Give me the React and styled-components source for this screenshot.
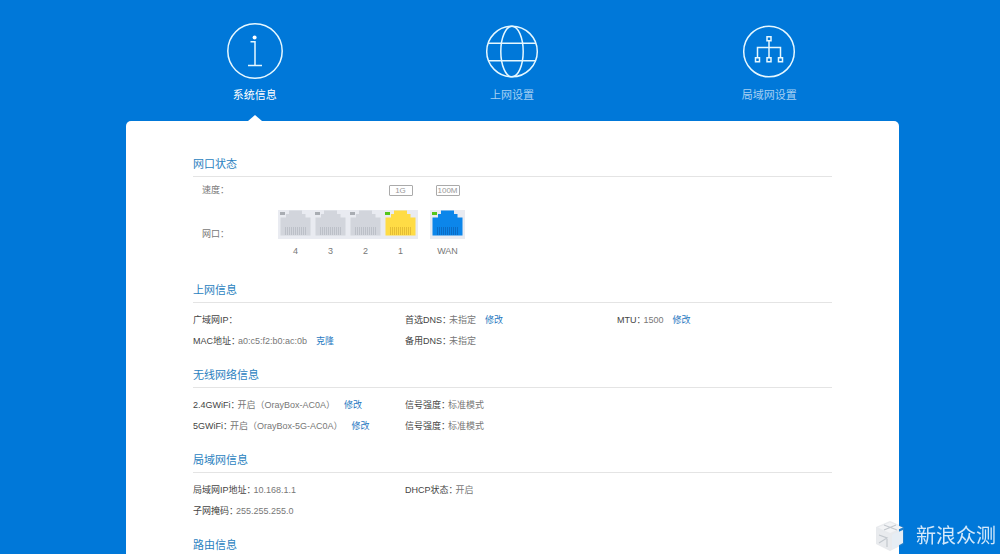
import styled, { createGlobalStyle } from 'styled-components'

const GlobalStyle = createGlobalStyle`
  * {
    box-sizing: border-box;
  }

  html {
    scrollbar-width: none;
  }

  body {
    margin: 0;
    background-color: #0078d9;
    color: #777;
    font-family: 'Liberation Sans', 'Noto Sans CJK SC', sans-serif;
    font-size: 9px;
    line-height: 21px;
  }
`

const Page = styled.div`
  display: flex;
  flex-direction: column;
  min-height: 100vh;
  padding: 0 101px 0 126px;
`

const Tabs = styled.nav`
  display: grid;
  grid-template-columns: repeat(3, 1fr);
  padding-right: 1px;
`

const Tab = styled.a`
  display: flex;
  flex-direction: column;
  align-items: center;
  padding-top: 23px;
  color: ${({ $active }) => ($active ? '#fff' : '#a6d0f3')};
  font-size: 11px;
  line-height: 20px;
  text-decoration: none;

  svg {
    margin-bottom: 6px;
  }

  &::after {
    content: '';
    margin-top: 10px;
    border: 7px solid transparent;
    border-top: 0;
    border-bottom: 6px solid ${({ $active }) => ($active ? '#fff' : 'transparent')};
  }
`

const Panel = styled.main`
  flex: 1;
  padding: 33px 67px 0;
  background-color: #fff;
  border-radius: 5px 5px 0 0;
`

const Section = styled.section`
  margin-bottom: 13px;
`

const Title = styled.h2`
  margin: 0;
  padding-bottom: 2px;
  border-bottom: 1px solid #e4e4e4;
  color: #2a7fc0;
  font-size: 11px;
  font-weight: 400;
  line-height: 20px;
`

const Info = styled.dl`
  display: grid;
  grid-template-columns: repeat(3, 1fr);
  margin: 7px 0 0;
  padding-right: 3px;
`

const Item = styled.div`
  display: flex;
  grid-column: ${({ $col }) => $col};
  white-space: nowrap;

  dt {
    margin-right: -2px;
    color: #444;
  }

  dd {
    margin: 0;
  }
`

const Action = styled.a`
  margin-left: 9px;
  color: #1f78c1;
  text-decoration: none;
`

const PortRow = styled.div`
  display: flex;
  margin-top: ${({ $gap }) => $gap}px;
`

const Ports = styled.div`
  padding-bottom: 3px;
`

const PortLabel = styled.span`
  width: 85px;
  padding-left: 9px;
  line-height: ${({ $height }) => $height}px;
`

const Port = styled.div`
  display: flex;
  flex-direction: column;
  align-items: center;
  width: 35px;
  margin-left: ${({ $wan }) => ($wan ? 12 : 0)}px;
  line-height: 25px;

  svg {
    display: block;
  }
`

const Speed = styled.span`
  width: 24px;
  margin-top: 5px;
  border: 1px solid #aaa;
  border-radius: 1px;
  color: #999;
  font-size: 8px;
  line-height: 9px;
  text-align: center;
`

const Watermark = styled.div`
  position: fixed;
  right: 4px;
  bottom: 3px;
  display: flex;
  align-items: center;
  gap: 11px;
  color: #d3e8fa;
  font-size: 20px;
  line-height: 28px;
`

const InfoIcon = () => (
  <svg width="56" height="56" viewBox="0 0 56 56" fill="none" stroke="#e6f8ff" strokeWidth="1.5">
    <circle cx="28" cy="28" r="27.2" />
    <path d="M23.5 18.8H28V42.5M21 42.5H35" />
    <circle cx="27.6" cy="14.6" r="2" fill="#fff" stroke="none" />
  </svg>
)

const GlobeIcon = () => (
  <svg width="56" height="56" viewBox="0 0 56 56" fill="none" stroke="#e6f8ff" strokeWidth="1.5">
    <circle cx="28" cy="28.5" r="25.3" />
    <ellipse cx="28" cy="28.5" rx="11.2" ry="25.3" />
    <path d="M4.2 20.3H51.8M4.2 37.8H51.8" />
  </svg>
)

const LanIcon = () => (
  <svg width="56" height="56" viewBox="0 0 56 56" fill="none" stroke="#e6f8ff" strokeWidth="1.5">
    <circle cx="28" cy="28.5" r="25.3" />
    <path d="M28 18V34.5M16.5 34.5V24.5H39.5V34.5" />
    <path d="M26 13.8h4v4h-4zM14.5 34.7h4v4h-4zM26 34.7h4v4h-4zM37.5 34.7h4v4h-4z" />
  </svg>
)

const Socket = ({ color, pins, led }) => (
  <svg width="35" height="29" viewBox="0 0 35 29">
    <path fill="#e9ebf1" d="M0 0h35v29H0z" />
    <path fill={led} d="M2 2h5v3H2z" />
    <path fill={color} d="M2.5 25.5V7.5H8V4h3V0.5h13V4h3.5v3.5h5v18z" />
    <path
      stroke={pins}
      d="M7.5 17v8M9.5 17v8M11.5 17v8M13.5 17v8M15.5 17v8M17.5 17v8M19.5 17v8M21.5 17v8M23.5 17v8M25.5 17v8M27.5 17v8"
    />
  </svg>
)

const CubeLogo = () => (
  <svg width="30" height="30" viewBox="0 0 30 30">
    <path fill="#8b98a5" opacity="0.2" d="M15 0L29 6V23L15 30L1 23V6z" />
    <path fill="#f3f4f6" d="M15 1.5l13 5-13 5.5L3 6.5z" />
    <path fill="#e9ebee" d="M2 9l13 4.5v14.5L2 22z" />
    <path fill="#e6edf4" d="M28 9l-11 4.5v14.5l11-6z" />
    <path fill="none" stroke="#c3c8ce" strokeWidth="1.2" d="M9 4l13 5M21 4L9 9M4 14l8 3-8 5M12 18v8" />
  </svg>
)

const tabs = [
  { name: '系统信息', Icon: InfoIcon, active: true },
  { name: '上网设置', Icon: GlobeIcon },
  { name: '局域网设置', Icon: LanIcon },
]

const ports = [
  { name: '4', color: '#d2d5dc', pins: '#bcc0c8', led: '#a9adb3' },
  { name: '3', color: '#d2d5dc', pins: '#bcc0c8', led: '#a9adb3' },
  { name: '2', color: '#d2d5dc', pins: '#bcc0c8', led: '#a9adb3' },
  { name: '1', speed: '1G', color: '#ffdc45', pins: '#e5bd35', led: '#55c51c' },
  { name: 'WAN', speed: '100M', color: '#0c86ea', pins: '#0a6cc6', led: '#55c51c', wan: true },
]

const sections = [
  {
    title: '上网信息',
    items: [
      { col: 1, label: '广域网IP：' },
      { col: 2, label: '首选DNS：', value: '未指定', action: '修改' },
      { col: 3, label: 'MTU：', value: '1500', action: '修改' },
      { col: 1, label: 'MAC地址：', value: 'a0:c5:f2:b0:ac:0b', action: '克隆' },
      { col: 2, label: '备用DNS：', value: '未指定' },
    ],
  },
  {
    title: '无线网络信息',
    items: [
      { col: 1, label: '2.4GWiFi：', value: '开启（OrayBox-AC0A）', action: '修改' },
      { col: 2, label: '信号强度：', value: '标准模式' },
      { col: 1, label: '5GWiFi：', value: '开启（OrayBox-5G-AC0A）', action: '修改' },
      { col: 2, label: '信号强度：', value: '标准模式' },
    ],
  },
  {
    title: '局域网信息',
    items: [
      { col: 1, label: '局域网IP地址：', value: '10.168.1.1' },
      { col: 2, label: 'DHCP状态：', value: '开启' },
      { col: 1, label: '子网掩码：', value: '255.255.255.0' },
    ],
  },
]

const App = () => {
  return (
    <>
      <GlobalStyle />
      <Page>
        <Tabs>
          {tabs.map(({ name, Icon, active }) => (
            <Tab key={name} href="#" $active={active}>
              <Icon />
              {name}
            </Tab>
          ))}
        </Tabs>
        <Panel>
          <Section>
            <Title>网口状态</Title>
            <Ports>
              <PortRow $gap={3}>
                <PortLabel $height={20}>速度：</PortLabel>
                {ports.map(({ name, speed, wan }) => (
                  <Port key={name} $wan={wan}>
                    {speed && <Speed>{speed}</Speed>}
                  </Port>
                ))}
              </PortRow>
              <PortRow $gap={10}>
                <PortLabel $height={48}>网口：</PortLabel>
                {ports.map(({ name, color, pins, led, wan }) => (
                  <Port key={name} $wan={wan}>
                    <Socket color={color} pins={pins} led={led} />
                    {name}
                  </Port>
                ))}
              </PortRow>
            </Ports>
          </Section>
          {sections.map(({ title, items }) => (
            <Section key={title}>
              <Title>{title}</Title>
              <Info>
                {items.map(({ col, label, value, action }, index) => (
                  <Item key={index} $col={col}>
                    <dt>{label}</dt>
                    <dd>
                      {value}
                      {action && <Action href="#">{action}</Action>}
                    </dd>
                  </Item>
                ))}
              </Info>
            </Section>
          ))}
          <Title>路由信息</Title>
        </Panel>
      </Page>
      <Watermark>
        <CubeLogo />
        新浪众测
      </Watermark>
    </>
  )
}

export default App
